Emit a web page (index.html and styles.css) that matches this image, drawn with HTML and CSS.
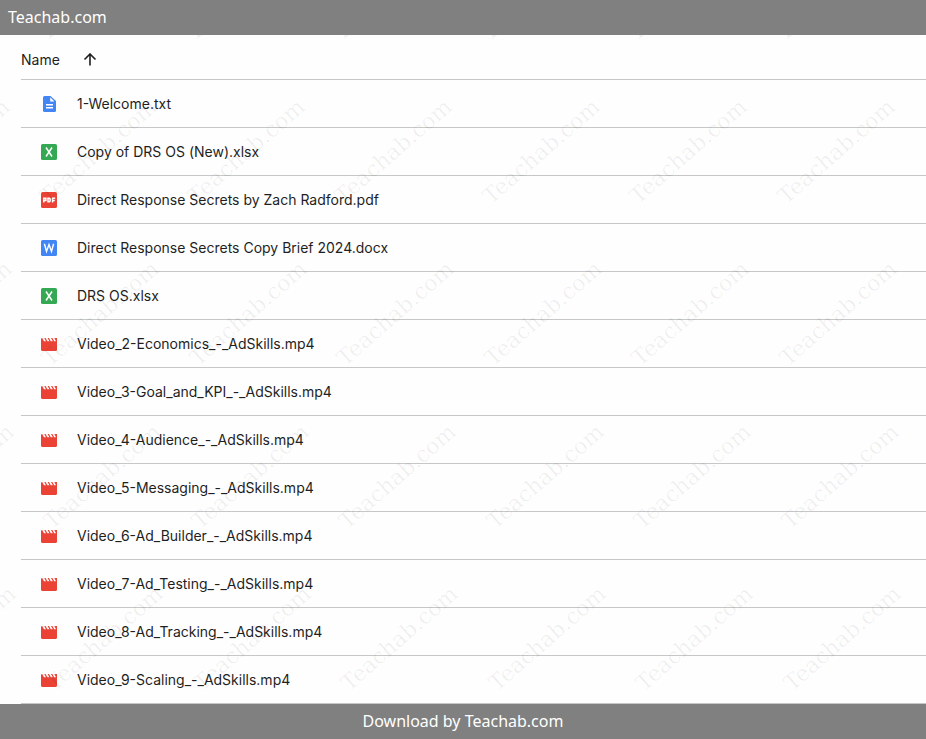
FILE: index.html
```html
<!DOCTYPE html>
<html lang="en">
<head>
  <meta charset="UTF-8">
  <meta name="viewport" content="width=device-width, initial-scale=1.0">
  <title>Teachab.com</title>
  <link rel="stylesheet" href="styles.css">
</head>
<body>
  <!-- Icons used by the rows -->
  <svg class="sprite" aria-hidden="true">
    <symbol id="icon-txt" viewBox="0 0 16 16">
      <path fill="#4285f4" d="M3.500 0H9.500L15 5V14.500A1.500 1.500 0 0 1 13.500 16H3.500A1.500 1.500 0 0 1 2 14.500V1.500A1.500 1.500 0 0 1 3.500 0Z"/>
      <path fill="#fff" d="M9.200 1.200V5.500H13.500ZM5 8H12V9.500H5ZM5 11H12V12.500H5Z"/>
    </symbol>
    <symbol id="icon-xlsx" viewBox="0 0 16 16">
      <rect width="16" height="16" rx="1.600" fill="#34a853"/>
      <path fill="none" stroke="#fff" stroke-width="1.500" d="M5 3.500L11 12.500M11 3.500L5 12.500"/>
    </symbol>
    <symbol id="icon-pdf" viewBox="0 0 16 16">
      <rect width="16" height="16" rx="1.600" fill="#ea4335"/>
      <path fill="none" stroke="#fff" stroke-width="1.500" d="M2.750 10.500V6.250H4.900V8.400H2.750M7 6.250V9.750H8.300L9.100 9.100V6.900L8.300 6.250ZM11.550 10.500V6.250H14.200M11.550 8.500H13.800"/>
    </symbol>
    <symbol id="icon-docx" viewBox="0 0 16 16">
      <rect width="16" height="16" rx="1.600" fill="#4285f4"/>
      <path fill="none" stroke="#fff" stroke-width="1.400" d="M3.400 3.800L5.500 11.500L8 4.500L10.500 11.500L12.600 3.800"/>
    </symbol>
    <symbol id="icon-video" viewBox="0 0 16 16">
      <path fill="#ea4335" d="M1.200 2L3 5.200H5L3.200 2H4.600L6.400 5.200H8.400L6.600 2H8L9.800 5.200H11.800L10 2H11.400L13.200 5.200H15L13.300 2H16V13.500A1.500 1.500 0 0 1 14.500 15H1.500A1.500 1.500 0 0 1 0 13.500V3.200A1.200 1.200 0 0 1 1.200 2Z"/>
    </symbol>
  </svg>

  <header class="top-bar">Teachab.com</header>

  <main class="files">
    <table class="file-table">
      <thead>
        <tr>
          <th>
            <button type="button" class="sort-button">
              Name
              <svg class="sort-arrow" viewBox="0 0 14 14" aria-hidden="true">
                <path d="M7 12.500V1.500M1.500 6.500L7 1L12.500 6.500"/>
              </svg>
            </button>
          </th>
        </tr>
      </thead>
      <tbody>
        <tr><td><div class="file"><svg class="file-icon"><use href="#icon-txt"/></svg>1-Welcome.txt</div></td></tr>
        <tr><td><div class="file"><svg class="file-icon"><use href="#icon-xlsx"/></svg>Copy of DRS OS (New).xlsx</div></td></tr>
        <tr><td><div class="file"><svg class="file-icon"><use href="#icon-pdf"/></svg>Direct Response Secrets by Zach Radford.pdf</div></td></tr>
        <tr><td><div class="file"><svg class="file-icon"><use href="#icon-docx"/></svg>Direct Response Secrets Copy Brief 2024.docx</div></td></tr>
        <tr><td><div class="file"><svg class="file-icon"><use href="#icon-xlsx"/></svg>DRS OS.xlsx</div></td></tr>
        <tr><td><div class="file"><svg class="file-icon"><use href="#icon-video"/></svg>Video_2-Economics_-_AdSkills.mp4</div></td></tr>
        <tr><td><div class="file"><svg class="file-icon"><use href="#icon-video"/></svg>Video_3-Goal_and_KPI_-_AdSkills.mp4</div></td></tr>
        <tr><td><div class="file"><svg class="file-icon"><use href="#icon-video"/></svg>Video_4-Audience_-_AdSkills.mp4</div></td></tr>
        <tr><td><div class="file"><svg class="file-icon"><use href="#icon-video"/></svg>Video_5-Messaging_-_AdSkills.mp4</div></td></tr>
        <tr><td><div class="file"><svg class="file-icon"><use href="#icon-video"/></svg>Video_6-Ad_Builder_-_AdSkills.mp4</div></td></tr>
        <tr><td><div class="file"><svg class="file-icon"><use href="#icon-video"/></svg>Video_7-Ad_Testing_-_AdSkills.mp4</div></td></tr>
        <tr><td><div class="file"><svg class="file-icon"><use href="#icon-video"/></svg>Video_8-Ad_Tracking_-_AdSkills.mp4</div></td></tr>
        <tr><td><div class="file"><svg class="file-icon"><use href="#icon-video"/></svg>Video_9-Scaling_-_AdSkills.mp4</div></td></tr>
      </tbody>
    </table>

    <!-- Watermark -->
    <svg class="watermark" aria-hidden="true">
      <defs>
        <text id="mark" transform="rotate(-41)">Teachab.com</text>
        <g id="mark-row">
          <use href="#mark"/>
          <use href="#mark" transform="translate(147 0)"/>
          <use href="#mark" transform="translate(295 0)"/>
          <use href="#mark" transform="translate(442 0)"/>
          <use href="#mark" transform="translate(590 0)"/>
          <use href="#mark" transform="translate(737 0)"/>
          <use href="#mark" transform="translate(885 0)"/>
        </g>
      </defs>
      <use href="#mark-row" x="-101" y="7"/>
      <use href="#mark-row" x="-99" y="170"/>
      <use href="#mark-row" x="-97" y="332"/>
      <use href="#mark-row" x="-95" y="495"/>
      <use href="#mark-row" x="-93" y="657"/>
    </svg>
  </main>

  <footer class="bottom-bar">Download by Teachab.com</footer>
</body>
</html>
```
FILE: styles.css
```css
* {
  box-sizing: border-box;
}
body {
  margin: 0;
  min-height: 100vh;
  display: flex;
  flex-direction: column;
  background: #fefefe;
  color: #1f1f1f;
  font-family: Inter, Roboto, sans-serif;
  font-size: 14px;
  line-height: 20px;
}
.sprite {
  display: none;
}
.top-bar, .bottom-bar {
  height: 35px;
  padding: 0 8px;
  background: #808080;
  color: #fff;
  font-family: "Noto Sans", sans-serif;
  font-size: 16px;
  line-height: 35px;
}
.bottom-bar {
  margin-top: auto;
  text-align: center;
}
.files {
  position: relative;
  flex: 1;
  padding-left: 21px;
}
.file-table {
  width: 100%;
  border-collapse: separate;
  border-spacing: 0;
}
.file-table th, .file-table td {
  height: 48px;
  padding: 0;
  border-bottom: 1px solid #c7c7c7;
  text-align: left;
}
.file-table th {
  height: 45px;
  padding-top: 6px;
}
.sort-button {
  display: flex;
  align-items: center;
  gap: 23px;
  padding: 0;
  border: none;
  background: none;
  color: inherit;
  font: inherit;
  font-weight: 400;
  cursor: pointer;
}
.sort-arrow {
  width: 14px;
  height: 14px;
  fill: none;
  stroke: currentColor;
  stroke-width: 1.6px;
}
.file {
  display: flex;
  align-items: center;
  gap: 20px;
  padding-left: 20px;
}
.file-icon {
  width: 16px;
  height: 16px;
}
.watermark {
  position: absolute;
  top: 0;
  left: 0;
  width: 100%;
  height: 100%;
  overflow: hidden;
  pointer-events: none;
  fill: #000;
  fill-opacity: 0.06;
  font-family: "DejaVu Serif", serif;
  font-size: 22px;
}
```
